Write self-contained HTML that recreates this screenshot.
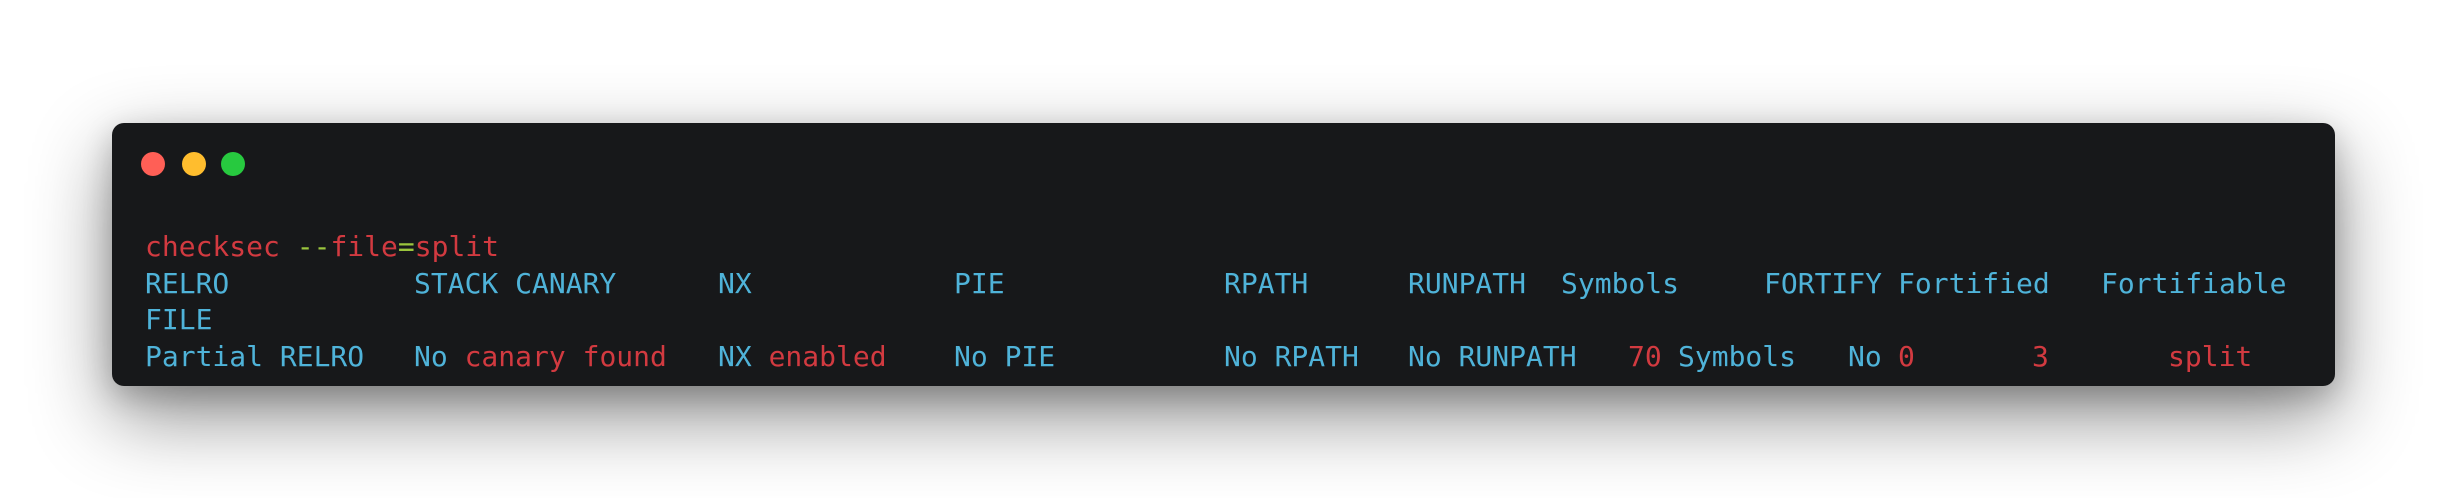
<!DOCTYPE html>
<html><head><style>
html,body{margin:0;padding:0;width:2448px;height:498px;background:#fff;overflow:hidden}
.win{position:absolute;left:112px;top:123px;width:2223px;height:263px;background:#17181a;border-radius:12px;box-shadow:0 30px 80px rgba(0,0,0,0.45),0 10px 30px rgba(0,0,0,0.2)}
.dot{position:absolute;top:152px;width:24px;height:24px;border-radius:50%}
.t{position:absolute;font-family:"DejaVu Sans Mono","Liberation Mono",monospace;font-size:28px;line-height:36px;white-space:pre;color:#4fb3d9}
.r{color:#d23a40}.g{color:#9bc53d}
</style></head><body>
<div class="win"></div>
<div class="dot" style="left:141px;background:#ff5f56"></div>
<div class="dot" style="left:182px;background:#ffbd2e"></div>
<div class="dot" style="left:221px;background:#27c93f"></div>

<div class="t r" style="left:145px;top:229px">checksec <span class="g">--</span>file<span class="g">=</span>split</div>

<div class="t" style="left:145px;top:266px">RELRO</div>
<div class="t" style="left:414px;top:266px">STACK CANARY</div>
<div class="t" style="left:718px;top:266px">NX</div>
<div class="t" style="left:954px;top:266px">PIE</div>
<div class="t" style="left:1224px;top:266px">RPATH</div>
<div class="t" style="left:1408px;top:266px">RUNPATH</div>
<div class="t" style="left:1561px;top:266px">Symbols</div>
<div class="t" style="left:1764px;top:266px">FORTIFY</div>
<div class="t" style="left:1898px;top:266px">Fortified</div>
<div class="t" style="left:2101px;top:266px">Fortifiable</div>

<div class="t" style="left:145px;top:302px">FILE</div>

<div class="t" style="left:145px;top:339px">Partial RELRO</div>
<div class="t" style="left:414px;top:339px">No <span class="r">canary found</span></div>
<div class="t" style="left:718px;top:339px">NX <span class="r">enabled</span></div>
<div class="t" style="left:954px;top:339px">No PIE</div>
<div class="t" style="left:1224px;top:339px">No RPATH</div>
<div class="t" style="left:1408px;top:339px">No RUNPATH</div>
<div class="t r" style="left:1628px;top:339px">70</div>
<div class="t" style="left:1678px;top:339px">Symbols</div>
<div class="t" style="left:1848px;top:339px">No</div>
<div class="t r" style="left:1898px;top:339px">0</div>
<div class="t r" style="left:2032px;top:339px">3</div>
<div class="t r" style="left:2168px;top:339px">split</div>
</body></html>
